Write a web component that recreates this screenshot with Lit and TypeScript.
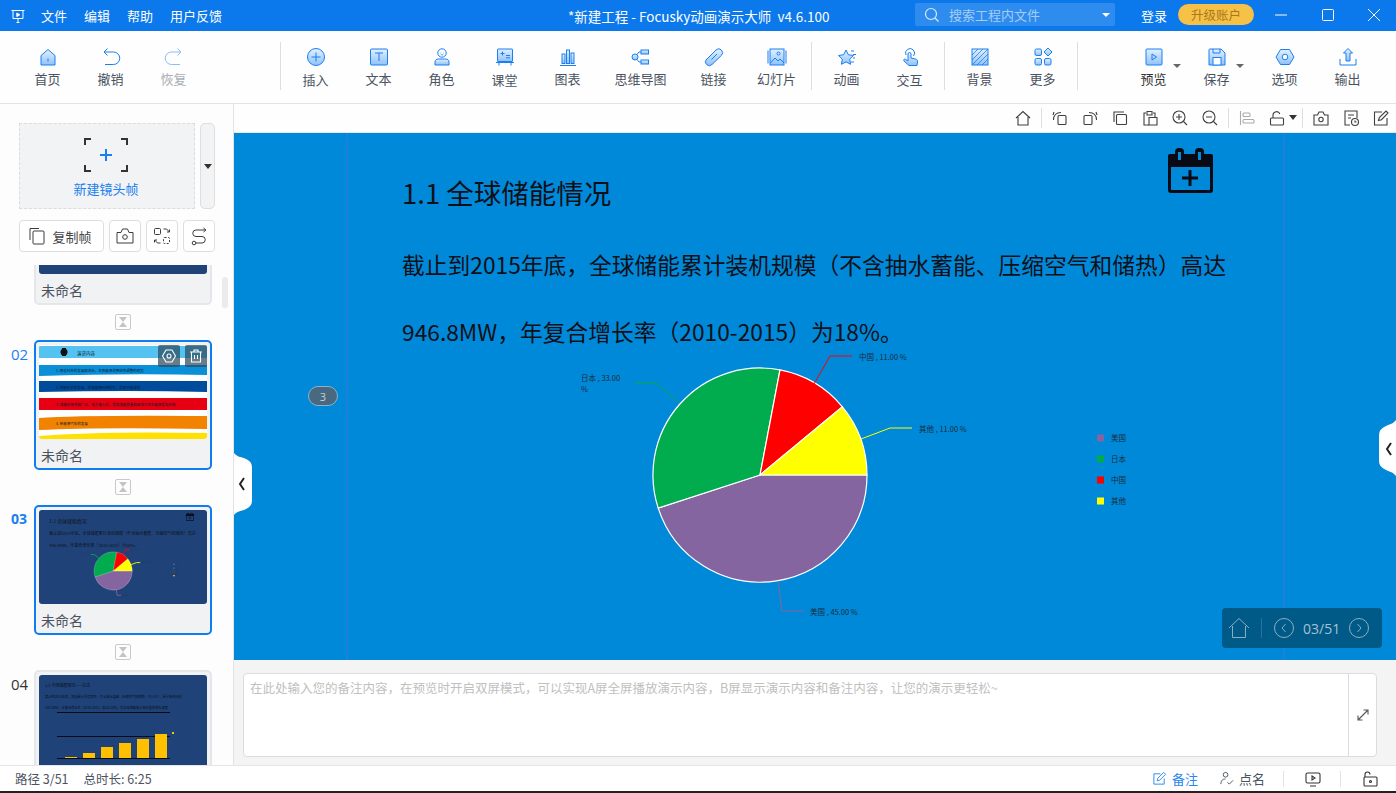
import { LitElement, html, css, svg } from "lit";
import { customElement } from "lit/decorators.js";

const ic: Record<string, unknown> = {
  home: svg`<path class="f" d="M5 10.5 12 4.5l7 6V20H5z"/><path d="M12 13.5v3"/>`,
  undo: svg`<path d="M8.5 3.5 5 7l3.5 3.5"/><path d="M5 7h9.5a6.2 6.2 0 0 1 0 12.5H6"/>`,
  redo: svg`<path d="M15.5 3.5 19 7l-3.5 3.5"/><path d="M19 7H9.5a6.2 6.2 0 0 0 0 12.5H18"/>`,
  insert: svg`<circle class="f" cx="12" cy="12" r="8.5"/><path d="M7.5 12h9M12 7.5v9"/>`,
  text: svg`<rect class="f" x="3.5" y="4" width="17" height="16" rx="1"/><path d="M8 8h8M12 8v8"/>`,
  role: svg`<circle cx="12" cy="8" r="4.2"/><path d="M10.5 8h.6M13 8h.6M10.8 9.8h2.4" stroke-width=".8"/><path class="f" d="M5 20v-3c0-2 1.5-3 3.5-3h7c2 0 3.5 1 3.5 3v3z"/>`,
  cls: svg`<rect class="f" x="4.5" y="4" width="15" height="12.5" rx=".5"/><path d="M7.5 8.5h4M9.5 6.5v4M13 10.5h4M13 12.8h4"/><path d="M3 17.5h18M6 18v2.500M18 18v2.500"/>`,
  chart: svg`<rect class="f" x="6" y="9" width="3" height="9.5"/><rect class="f" x="10.5" y="5" width="3" height="13.5"/><rect class="f" x="15" y="8" width="3" height="10.5"/><path d="M4 20.5h16"/>`,
  mind: svg`<circle class="f" cx="6" cy="12" r="3"/><rect class="f" x="12" y="5" width="7.5" height="4"/><rect class="f" x="12" y="15" width="7.5" height="4"/><path d="M8 9.5 10 7h2M8 14.5l2 2.500h2"/>`,
  link: svg`<path class="f" d="M5.5 14.5 14.5 5.5a3.8 3.8 0 0 1 5.4 5.4L10.5 20a3.8 3.8 0 0 1-5.4-5.4z" transform="translate(-.5 -.5)"/><path d="m9.5 14.5 5.5-5.500"/>`,
  slide: svg`<rect class="f" x="5" y="4" width="14" height="16"/><path d="M3 5.5v13M21 5.500v13M5.500 18l4.500-5 3 3 2-2 4 4"/><circle cx="13.5" cy="8.5" r="1.5"/>`,
  anim: svg`<path class="f" d="m10 4 2.300 4.700 5.200.8-3.800 3.600.9 5.200L10 15.900l-4.600 2.400.9-5.200L2.500 9.500l5.200-.8z" transform="translate(1 1)"/><path d="M16 6h3M18 9.5h3M18 13h2M16 17h3"/>`,
  touch: svg`<path d="M8 10a4.500 4.500 0 1 1 7.500 1"/><path class="f" d="M10 9a1.500 1.500 0 0 1 3 0v4l4.500 1c1.500.4 2.300 1.200 2 3l-.5 3.500h-8L6 16c-.9-1 .3-2.400 1.500-1.700L10 16z"/>`,
  bg: svg`<rect class="f" x="4" y="4" width="16" height="16"/><path d="M4 10 10 4M4 15 15 4M4 20 20 4M9 20 20 9M14 20l6-6" stroke-width=".8"/>`,
  more: svg`<rect class="f" x="4" y="4" width="6.5" height="6.5" rx="1.5"/><path class="f" d="m17 3 4 4-4 4-4-4z"/><rect class="f" x="4" y="13.5" width="6.5" height="6.5" rx="1.5"/><rect class="f" x="13.5" y="13.5" width="6.5" height="6.5" rx="1.5"/>`,
  play: svg`<rect class="f" x="4" y="4" width="16" height="16" rx="1"/><path d="m10 9 4.500 3-4.500 3z"/>`,
  save: svg`<path class="f" d="M4 5a1 1 0 0 1 1-1h11l4 4v12H4z"/><path d="M8 4v4h7V4"/><rect x="8" y="12.5" width="8" height="7.5" fill="#fff"/>`,
  opt: svg`<path class="f" d="M7.5 4.5h9L21 12l-4.500 7.500h-9L3 12z"/><circle cx="12" cy="12" r="2.8" fill="#fff"/>`,
  out: svg`<path d="M4 14v6h16v-6"/><path class="f" d="M12 3.5 16.5 8H14v8h-4V8H7.500z"/>`,
};

function slideContent() {
  const cx = 760, cy = 475, r = 107;
  const pt = (d: number) => {
    const a = (d * Math.PI) / 180;
    return `${(cx + r * Math.cos(a)).toFixed(1)} ${(cy + r * Math.sin(a)).toFixed(1)}`;
  };
  const slices: [number, number, string][] = [
    [0, 162, "#85659f"], [162, 280.8, "#00ac4e"], [280.8, 320.4, "#ff0000"], [320.4, 360, "#ffff00"],
  ];
  const legend: [string, string, number][] = [["美国", "#85659f", 438], ["日本", "#00ac4e", 459], ["中国", "#ff0000", 480], ["其他", "#ffff00", 501]];
  return svg`
    <text class="s-title" x="402" y="204">1.1 全球储能情况</text>
    <text class="s-body" x="402" y="274">截止到2015年底，全球储能累计装机规模（不含抽水蓄能、压缩空气和储热）高达</text>
    <text class="s-body" x="402" y="341">946.8MW，年复合增长率（2010-2015）为18%。</text>
    ${slices.map(([a, b, c]) => svg`<path d="M${cx} ${cy}L${pt(a)}A${r} ${r} 0 0 1 ${pt(b)}Z" fill="${c}" stroke="#fff" stroke-width="1.2"/>`)}
    <polyline class="lead" points="814,384 830,356 852,356" stroke="#ff0000"/>
    <polyline class="lead" points="861,439 890,428 912,428" stroke="#ffff00"/>
    <polyline class="lead" points="678,402 656,383 635,383" stroke="#00ac4e"/>
    <polyline class="lead" points="778,581 782,611 804,611" stroke="#85659f"/>
    <text class="s-lab" x="859" y="360">中国 , 11.00 %</text>
    <text class="s-lab" x="919" y="432">其他 , 11.00 %</text>
    <text class="s-lab" x="581" y="381">日本 , 33.00</text>
    <text class="s-lab" x="581" y="392">%</text>
    <text class="s-lab" x="810" y="615">美国 , 45.00 %</text>
    ${legend.map(([t, c, y]) => svg`<rect x="1097" y="${y - 3.5}" width="7" height="7" fill="${c}"/><text class="s-lab" x="1111" y="${y + 3}">${t}</text>`)}
    <g fill="#0a0a14">
      <path d="M1171 154h40a2 2 0 0 1 2 2v34a3 3 0 0 1-3 3h-39a3 3 0 0 1-3-3v-34a2 2 0 0 1 2-2z"/>
      <rect class="gap" x="1171" y="167" width="39" height="23"/>
      <rect x="1175" y="148" width="9" height="14" rx="4"/>
      <rect x="1195" y="148" width="9" height="14" rx="4"/>
      <rect class="gap" x="1178" y="152" width="3" height="8"/>
      <rect class="gap" x="1198" y="152" width="3" height="8"/>
      <rect x="1182" y="176.500" width="16" height="3"/>
      <rect x="1188.500" y="170" width="3" height="16"/>
    </g>`;
}

@customElement("app-root")
export class AppRoot extends LitElement {
  static styles = css`
    :host { display: block; width: 1396px; height: 793px; overflow: hidden; background: #fff; font-family: "Noto Sans CJK SC", "Noto Sans", sans-serif; color: #4b5361; }
    * { box-sizing: border-box; }
    .defs { display: block; width: 0; height: 0; }
    .app { display: flex; flex-direction: column; height: 793px; }

    .title { height: 31px; flex: none; background: #0b78ec; color: #fff; display: flex; align-items: center; font-size: 13px; position: relative; }
    .logo { width: 16px; height: 16px; margin-left: 10px; margin-right: 15px; fill: none; stroke: #fff; stroke-width: 1; }
    .menu { display: flex; gap: 17px; }
    .apptitle { position: absolute; left: 568px; font-size: 13.5px; white-space: pre; }
    .search { position: absolute; left: 915px; top: 3px; width: 200px; height: 23px; background: #2f8cef; border-radius: 2px; display: flex; align-items: center; color: #a3cdf8; padding-left: 9px; gap: 9px; font-size: 13px; }
    .search svg { width: 16px; height: 16px; fill: none; stroke: #d8e9fc; stroke-width: 1.2; flex: none; }
    .caret { width: 0; height: 0; border-left: 4px solid transparent; border-right: 4px solid transparent; border-top: 4px solid #fff; }
    .search .caret { margin-left: auto; margin-right: 5px; }
    .login { position: absolute; left: 1141px; font-size: 13px; }
    .upgrade { position: absolute; left: 1178px; top: 4px; width: 76px; height: 21px; border-radius: 11px; background: #f6c147; color: #a9781c; font-size: 12.5px; display: flex; align-items: center; justify-content: center; }
    .win { width: 16px; height: 16px; fill: none; stroke: #fff; stroke-width: 1; position: absolute; top: 7px; }
    .w1 { left: 1273px; } .w2 { left: 1320px; } .w3 { left: 1366px; }

    .tools { height: 73px; flex: none; border-bottom: 1px solid #e3e3e3; display: flex; padding-left: 16px; background: #fefefe; }
    .tool { width: 63px; flex: none; display: flex; flex-direction: column; align-items: center; padding-top: 14px; font-size: 13px; color: #4b5361; position: relative; line-height: 20px; }
    .tool svg { width: 24px; height: 24px; fill: none; stroke: #1a7ff0; stroke-width: 1; }
    .tool svg .f { fill: url(#g); }
    .tool span { white-space: nowrap; }
    .tool.low span { margin-top: 1px; }
    .tool.dim { color: #a9adb4; }
    .tool.dim svg { opacity: .5; }
    .tool.wide { width: 83px; }
    .tool.dark { color: #333; }
    .tool .drop { position: absolute; right: 4px; top: 33px; border-top-color: #666; }
    .vsep { flex: none; width: 1px; height: 48px; background: #dedede; margin: 11px 3px 0 3px; }
    .vsep.a { margin-left: 75px; }
    .vsep.b { margin-right: 44px; }
    .gap5 { width: 5px; flex: none; }

    .main { flex: 1; min-height: 0; display: flex; }
    .side { width: 234px; flex: none; border-right: 1px solid #e3e3e3; background: #fdfdfd; display: flex; flex-direction: column; position: relative; }
    .newrow { display: flex; gap: 5px; padding: 19px 18px 0 19px; }
    .newf { width: 176px; height: 86px; background: #f2f3f5; border: 1px dashed #dcdcdc; display: flex; flex-direction: column; align-items: center; color: #1a7ff0; font-size: 13px; padding: 14px 2px 0 0; gap: 7px; }
    .newf svg { width: 44px; height: 34px; fill: none; }
    .newd { width: 15px; height: 86px; background: #f2f3f5; border: 1px solid #dedede; border-radius: 5px; display: flex; align-items: center; justify-content: center; }
    .newd .caret { border-top-color: #333; border-top-width: 5px; }
    .btnrow { display: flex; gap: 5px; padding: 11px 18px 0 19px; }
    .btn { height: 32px; width: 32px; background: #fff; border: 1px solid #dedede; border-radius: 4px; display: flex; align-items: center; justify-content: center; font-size: 13px; color: #444; gap: 5px; }
    .btn.copy { width: 85px; padding-right: 4px; }
    .btn svg { width: 20px; height: 20px; fill: none; stroke: #3c3c3c; stroke-width: 1; }
    .list { flex: 1; min-height: 0; overflow: hidden; margin-top: 13px; }
    .row { display: flex; padding-left: 11px; height: 130px; position: relative; }
    .row.first { margin-top: -90px; }
    .num { width: 23px; font-family: "Open Sans", sans-serif; font-size: 15px; color: #333; padding-top: 3px; line-height: 22px; }
    .num.on { color: #1a7ff0; }
    .num.cur { color: #1a7ff0; font-weight: 700; font-size: 14px; }
    .card { width: 178px; height: 130px; border: 2px solid #e4e6ea; border-radius: 5px; background: #f1f2f4; padding: 3px; }
    .card.on { border-color: #0f7cf0; }
    .thumb { width: 168px; height: 94px; border-radius: 3px; overflow: hidden; display: block; background: #1f4378; }
    .thumb.white { background: #fff; }
    .thumb .lead { stroke-width: 5; }
    .thumb .gap { fill: #1f4378; }
    .cap { font-size: 14px; color: #4b5361; padding: 6px 0 0 2px; line-height: 20px; }
    .over { position: absolute; top: 5px; width: 22px; height: 22px; border-radius: 2px; background: rgba(45, 75, 95, .72); display: flex; align-items: center; justify-content: center; }
    .over.o1 { left: 158px; } .over.o2 { left: 185px; }
    .over svg { width: 16px; height: 16px; fill: none; stroke: #fff; stroke-width: 1.1; }
    .hg { height: 35px; display: flex; align-items: center; justify-content: center; padding: 0 0 1px 12px; }
    .hg svg { width: 16px; height: 16px; }
    .scroll { position: absolute; left: 222px; top: 173px; width: 6px; height: 31px; background: #ebebeb; border-radius: 3px; }

    .right { flex: 1; min-width: 0; display: flex; flex-direction: column; position: relative; }
    .ctool { height: 29px; flex: none; display: flex; align-items: center; justify-content: flex-end; background: #fefefe; border-bottom: 1px solid #e8e8e8; }
    .ctool svg { width: 18px; height: 18px; fill: none; stroke: #3f3f3f; stroke-width: 1.1; margin: 0 6px; flex: none; }
    .ctool svg.mute { stroke: #aaa; }
    .ctool i { width: 1px; height: 20px; background: #dedede; margin: 0 3px; flex: none; }
    .ctool .caret { border-top-color: #333; margin: 0 2px 2px -3px; border-top-width: 5px; }
    .canvas { height: 527px; flex: none; position: relative; background: #0089d8; overflow: hidden; }
    .canvas > svg.slide { display: block; width: 1162px; height: 527px; }
    .canvas .gap { fill: #0089d8; }
    .s-title { font-size: 27.5px; fill: #101018; }
    .s-body { font-size: 22.75px; fill: #101018; }
    .s-lab { font-size: 7.5px; fill: #1c2a38; }
    .lead { fill: none; stroke-width: 1; }
    .vl { position: absolute; top: 0; bottom: 0; width: 2px; background: #1f80dc; }
    .vl.l1 { left: 112px; } .vl.l2 { left: 1049px; }
    .pill { position: absolute; left: 74px; top: 253px; width: 30px; height: 20px; border-radius: 10px; background: #48697f; border: 1px solid #8fb4c8; color: #c4d3dc; font-size: 11px; display: flex; align-items: center; justify-content: center; font-family: "Open Sans", sans-serif; }
    .nav { position: absolute; left: 988px; top: 475px; width: 160px; height: 40px; border-radius: 4px; background: #005a87; display: flex; align-items: center; padding-left: 6px; color: #a6c2d4; font-family: "Open Sans", sans-serif; font-size: 14px; }
    .nav svg { fill: none; stroke: #8fadc0; stroke-width: 1; flex: none; }
    .nav i { width: 1px; height: 20px; background: #2b7199; margin: 0 12px 0 11px; }
    .nav span { margin: 0 9px; }
    .handle { position: absolute; }
    .handle svg { display: block; }
    .hl { left: 0; top: 320px; width: 18px; height: 62px; }
    .hr { right: 0; top: 287px; width: 17px; height: 56px; }

    .notes { flex: 1; min-height: 0; background: #f4f4f4; padding: 13px 19px 8px 9px; }
    .nbox { height: 84px; background: #fff; border: 1px solid #d9dce2; border-radius: 4px; display: flex; }
    .ntext { flex: 1; color: #c0c0c0; font-size: 12.5px; padding: 4px 6px; line-height: 20px; white-space: nowrap; overflow: hidden; }
    .nexp { width: 28px; flex: none; border-left: 1px solid #d9dce2; display: flex; align-items: center; justify-content: center; }
    .nexp svg { width: 14px; height: 14px; fill: none; stroke: #555; stroke-width: 1.1; }

    .status { height: 26px; flex: none; border-top: 1px solid #e6e6e6; background: #fff; display: flex; align-items: center; font-size: 12.5px; color: #4b5361; padding-left: 15px; }
    .status .sp { margin-left: 15px; }
    .st { display: flex; align-items: center; gap: 5px; font-size: 13px; }
    .st svg { width: 15px; height: 15px; fill: none; stroke: currentColor; stroke-width: 1; }
    .st.blue { color: #2c87ec; margin-left: auto; }
    .st.gray { margin-left: 21px; }
    .svl { width: 1px; height: 16px; background: #e3e3e3; flex: none; }
    .svl.v1 { margin-left: 18px; } .svl.v2 { margin-left: 18px; }
    .sico { width: 18px; height: 18px; fill: none; stroke: #333; stroke-width: 1.1; flex: none; margin-left: 20px; }
    .sico.last { margin-right: 17px; }
    .black { height: 2px; flex: none; background: #222; }
  `;

  private tool(label: string, icon: string, cls = "", drop = false) {
    return html`<div class="tool ${cls}"><svg viewBox="0 0 24 24">${ic[icon]}</svg><span>${label}</span>${drop ? html`<b class="caret drop"></b>` : ""}</div>`;
  }
  private hg() {
    return html`<div class="hg"><svg viewBox="0 0 16 16"><rect x=".5" y=".5" width="15" height="15" rx="1.5" fill="#fdfdfd" stroke="#c9c9c9"/><path d="M4 3h8L8 8l4 5H4l4-5z" fill="#c4c4c4"/></svg></div>`;
  }

  render() {
    return html`
      <svg class="defs"><defs><linearGradient id="g" x1="0" y1="0" x2="0" y2="1"><stop offset="0" stop-color="#e3f0fe"/><stop offset="1" stop-color="#8fc2f9"/></linearGradient></defs></svg>
      <div class="app">
        <div class="title">
          <svg class="logo" viewBox="0 0 16 16"><path d="M1.5 2.5h13M3 2.5v8h10v-8M8 10.5v4M6.5 14.5h3"/><path d="m6.800 5 3 1.800-3 1.800z" fill="#fff"/></svg>
          <div class="menu"><span>文件</span><span>编辑</span><span>帮助</span><span>用户反馈</span></div>
          <div class="apptitle">*新建工程 - Focusky动画演示大师  v4.6.100</div>
          <div class="search"><svg viewBox="0 0 16 16"><circle cx="7" cy="7" r="5.5"/><path d="m11 11 3.500 3.500"/></svg><span>搜索工程内文件</span><b class="caret"></b></div>
          <div class="login">登录</div>
          <div class="upgrade">升级账户</div>
          <svg class="win w1" viewBox="0 0 16 16"><path d="M2 8h12"/></svg>
          <svg class="win w2" viewBox="0 0 16 16"><rect x="2.5" y="2.5" width="11" height="11" rx="1"/></svg>
          <svg class="win w3" viewBox="0 0 16 16"><path d="m2 2 12 12M14 2 2 14"/></svg>
        </div>

        <div class="tools">
          ${this.tool("首页", "home")}${this.tool("撤销", "undo")}${this.tool("恢复", "redo", "dim")}
          <i class="vsep a"></i>
          ${this.tool("插入", "insert", "low")}${this.tool("文本", "text")}${this.tool("角色", "role")}${this.tool("课堂", "cls", "low")}${this.tool("图表", "chart")}${this.tool("思维导图", "mind", "wide")}${this.tool("链接", "link")}${this.tool("幻灯片", "slide")}
          <i class="vsep"></i>
          ${this.tool("动画", "anim")}${this.tool("交互", "touch", "low")}
          <i class="vsep"></i>
          ${this.tool("背景", "bg")}${this.tool("更多", "more")}
          <i class="vsep b"></i>
          ${this.tool("预览", "play", "dark", true)}${this.tool("保存", "save", "", true)}
          <div class="gap5"></div>
          ${this.tool("选项", "opt")}${this.tool("输出", "out")}
        </div>

        <div class="main">
          <div class="side">
            <div class="newrow">
              <div class="newf">
                <svg viewBox="0 0 44 34"><path d="M1 7V1h6M37 1h6v6M1 27v6h6M37 33h6v-6" stroke="#333" stroke-width="2"/><path d="M16 17h12M22 11v12" stroke="#1a7ff0" stroke-width="2"/></svg>
                <span>新建镜头帧</span>
              </div>
              <div class="newd"><b class="caret"></b></div>
            </div>
            <div class="btnrow">
              <div class="btn copy"><svg viewBox="0 0 20 20"><path d="M3 14V2.5h9"/><rect x="6" y="5" width="11" height="13" rx="1"/></svg><span>复制帧</span></div>
              <div class="btn"><svg viewBox="0 0 20 20"><path d="M2 6.5h4L7.5 3h5L14 6.5h4V17H2z"/><circle cx="10" cy="11" r="2.3"/></svg></div>
              <div class="btn"><svg viewBox="0 0 20 20"><rect x="2.5" y="2.5" width="6" height="6" rx="1"/><rect x="11.5" y="11.5" width="6" height="6" rx="1" stroke-dasharray="2 1.5"/><path d="M11.5 3h3l3 3M15 6h2.500V3.500M8.500 17h-3l-3-3M5 14H2.500v2.500"/></svg></div>
              <div class="btn"><svg viewBox="0 0 20 20"><path d="M16 4H7a3.200 3.200 0 0 0 0 6.500h6a3 3 0 0 1 0 6.500H7"/><path d="m14.500 2 2.500 2-2.500 2"/><circle cx="5" cy="17" r="1.800"/></svg></div>
            </div>
            <div class="list">
              <div class="row first"><div class="num"></div><div class="card"><div class="thumb"></div><div class="cap">未命名</div></div></div>
              ${this.hg()}
              <div class="row">
                <div class="num on">02</div>
                <div class="card on">
                  ${this.thumb2()}
                  <div class="cap">未命名</div>
                </div>
                <div class="over o1"><svg viewBox="0 0 16 16"><path d="M5 2h6l3.500 6L11 14H5L1.500 8z"/><circle cx="8" cy="8" r="2"/></svg></div>
                <div class="over o2"><svg viewBox="0 0 16 16"><path d="M2 4h12M6 4V2h4v2M3.500 4v10h9V4M6.500 7v4M9.500 7v4"/></svg></div>
              </div>
              ${this.hg()}
              <div class="row">
                <div class="num cur">03</div>
                <div class="card on">
                  <svg class="thumb" viewBox="343 133 944 527" preserveAspectRatio="xMidYMid slice">${slideContent()}</svg>
                  <div class="cap">未命名</div>
                </div>
              </div>
              ${this.hg()}
              <div class="row">
                <div class="num">04</div>
                <div class="card">${this.thumb4()}</div>
              </div>
            </div>
            <div class="scroll"></div>
          </div>

          <div class="right">
            <div class="ctool">
              <svg viewBox="0 0 18 18"><path d="M2 9 9 2.500 16 9M4 8v8h10V8"/></svg>
              <i></i>
              <svg viewBox="0 0 18 18"><rect x="7" y="6.5" width="8" height="9" rx="1"/><path d="M2.500 11c0-5 3-7.500 7.500-7.500M2 6l1-3"/></svg>
              <svg viewBox="0 0 18 18"><rect x="3" y="6.5" width="8" height="9" rx="1"/><path d="M15.500 11c0-5-3-7.500-7.500-7.500M16 6l-1-3"/></svg>
              <svg viewBox="0 0 18 18"><path d="M3 13V3h10"/><rect x="5.5" y="5.5" width="10" height="10" rx="1"/></svg>
              <svg viewBox="0 0 18 18"><path d="M5 4H3v12h5M12 4h2v4M6 2.500h5V6H6z"/><path d="M8 8.500h8v7.500H8z"/></svg>
              <svg viewBox="0 0 18 18"><circle cx="8" cy="8" r="6"/><path d="M12.500 12.500 16 16M5 8h6M8 5v6"/></svg>
              <svg viewBox="0 0 18 18"><circle cx="8" cy="8" r="6"/><path d="M12.500 12.500 16 16M5 8h6"/></svg>
              <i></i>
              <svg class="mute" viewBox="0 0 18 18"><path d="M2.500 2v14"/><rect x="5" y="4" width="7" height="3.500" rx="1"/><rect x="5" y="10.500" width="11" height="3.500" rx="1"/></svg>
              <svg viewBox="0 0 18 18"><rect x="2.5" y="9" width="13" height="7" rx="1"/><path d="M5 9V6a3.500 3.500 0 0 1 6.800-1"/></svg>
              <b class="caret"></b>
              <i></i>
              <svg viewBox="0 0 18 18"><path d="M2 6h3.500L7 3h4l1.500 3H16v10H2z"/><circle cx="9" cy="10.5" r="2.2"/></svg>
              <svg viewBox="0 0 18 18"><path d="M8 16H3V2h12v7M6 6h6M6 9h3"/><circle cx="13" cy="13" r="3.500"/><path d="M13 11.500V13h1.500"/></svg>
              <svg viewBox="0 0 18 18"><path d="M15 9v7H2.500V3H10M6.500 11.500l.8-3L14 2l2 2-6.500 6.700z"/></svg>
            </div>
            <div class="canvas">
              <svg class="slide" viewBox="234 133 1162 527">${slideContent()}</svg>
              <div class="vl l1"></div>
              <div class="vl l2"></div>
              <div class="pill">3</div>
              <div class="nav">
                <svg viewBox="0 0 22 22" width="22" height="22"><path d="M1 11 11 1.500 21 11M4.500 9v11.500h13V9"/></svg>
                <i></i>
                <svg viewBox="0 0 20 20" width="20" height="20"><circle cx="10" cy="10" r="9.500"/><path d="M11.500 6 8 10l3.500 4"/></svg>
                <span>03/51</span>
                <svg viewBox="0 0 20 20" width="20" height="20"><circle cx="10" cy="10" r="9.500"/><path d="M8.500 6 12 10l-3.500 4"/></svg>
              </div>
              <div class="handle hl"><svg width="18" height="62" viewBox="0 0 18 62"><path d="M0 0C3 4 7 4 10 5Q18 8 18 14V48Q18 54 10 57C7 58 3 58 0 62z" fill="#fff"/><path d="M10 25 6 31l4 6" fill="none" stroke="#222" stroke-width="2"/></svg></div>
              <div class="handle hr"><svg width="17" height="56" viewBox="0 0 17 56"><path d="M17 0C14 4 11 4 7 6Q0 9 0 15V41Q0 47 7 50C11 52 14 52 17 56z" fill="#fff"/><path d="M12 23 8 29l4 6" fill="none" stroke="#222" stroke-width="2"/></svg></div>
            </div>
            <div class="notes">
              <div class="nbox">
                <div class="ntext">在此处输入您的备注内容，在预览时开启双屏模式，可以实现A屏全屏播放演示内容，B屏显示演示内容和备注内容，让您的演示更轻松~</div>
                <div class="nexp"><svg viewBox="0 0 14 14"><path d="M2 12 12 2M7.500 2H12v4.500M2 7.500V12h4.500"/></svg></div>
              </div>
            </div>
          </div>
        </div>

        <div class="status">
          <span>路径 3/51</span><span class="sp">总时长: 6:25</span>
          <div class="st blue"><svg viewBox="0 0 16 16"><path d="M13 8v6H2V3h7M5.500 10.500l.7-2.800L12.500 1.500l2 2-6.300 6.300z"/></svg><span>备注</span></div>
          <div class="st gray"><svg viewBox="0 0 16 16"><circle cx="7" cy="4" r="2.500"/><path d="M2 14c0-4 2-5.500 5-5.500M9 12l2 2 4-4"/></svg><span>点名</span></div>
          <div class="svl v1"></div>
          <svg class="sico" viewBox="0 0 18 18"><rect x="2" y="3" width="14" height="10" rx="1.5"/><path d="m8 6 3 2-3 2zM6 16h6"/></svg>
          <div class="svl v2"></div>
          <svg class="sico last" viewBox="0 0 18 18"><rect x="3" y="7" width="13" height="9" rx="1"/><path d="M4 7V4.500a2.500 2.500 0 0 1 5 0"/><circle cx="9.5" cy="11.5" r="1"/></svg>
        </div>
        <div class="black"></div>
      </div>
    `;
  }

  private thumb2() {
    const txt: [string, number][] = [
      ["1. 随着科技的发展和进步，世界能源消费结构调整的趋势", 27],
      ["2. 储能技术的发展，提高能源利用效率，实现节能减排", 44],
      ["3. 储能应用领域广泛，电力接入后，提高电能质量和促进可再生能源发电并网", 61],
      ["4. 新能源汽车的发展", 80],
    ];
    return svg`<svg class="thumb white" viewBox="0 0 168 94">
      <rect y="1" width="168" height="12" fill="#55c3f2"/>
      <path d="M0 20H168V30Q90 28 0 31z" fill="#0a8fd9"/>
      <path d="M0 36H168V47Q90 45 0 47z" fill="#004c9c"/>
      <rect y="53" width="168" height="12" fill="#e60012"/>
      <path d="M0 73Q40 70 168 71V84Q60 82 0 85z" fill="#f18300"/>
      <path d="M0 94V91Q60 86 168 88V94z" fill="#ffe000"/>
      <circle cx="25" cy="7" r="3.5" fill="#111"/><rect x="23" y="3" width="4" height="8" fill="#111"/>
      <text x="38" y="10" font-size="4.5" fill="#0a1a30">演讲内容</text>
      ${txt.map(([t, y]) => svg`<text x="17" y="${y}" font-size="3.5" fill="#0a1a30">${t}</text>`)}
    </svg>`;
  }

  private thumb4() {
    const bars: [number, number][] = [[26, 1], [44, 5], [62, 11], [80, 15], [98, 19], [116, 24]];
    return svg`<svg class="thumb" viewBox="0 0 168 94">
      <text x="6" y="12" font-size="4" fill="#0b1020">1.2 中国储能情况——抗击</text>
      <text x="6" y="23" font-size="3.2" fill="#0b1020">截止到2015年底，我国累计投运项目（不含抽水蓄能、压缩空气和储热）共118个，累计装机规模</text>
      <text x="6" y="34" font-size="3.2" fill="#0b1020">105.5MW，年复合增长率（2010-2015）高达110%，为全球储能累计装机量的增长速度</text>
      <path d="M18 37.5h113M18 61.5h113M18 83.5h113" stroke="#0a0a14" stroke-width="1"/>
      ${bars.map(([x, h]) => svg`<rect x="${x}" y="${83 - h}" width="12" height="${h}" fill="#ffc000"/>`)}
      <rect x="133" y="57" width="2" height="2" fill="#ffc000"/>
    </svg>`;
  }
}
